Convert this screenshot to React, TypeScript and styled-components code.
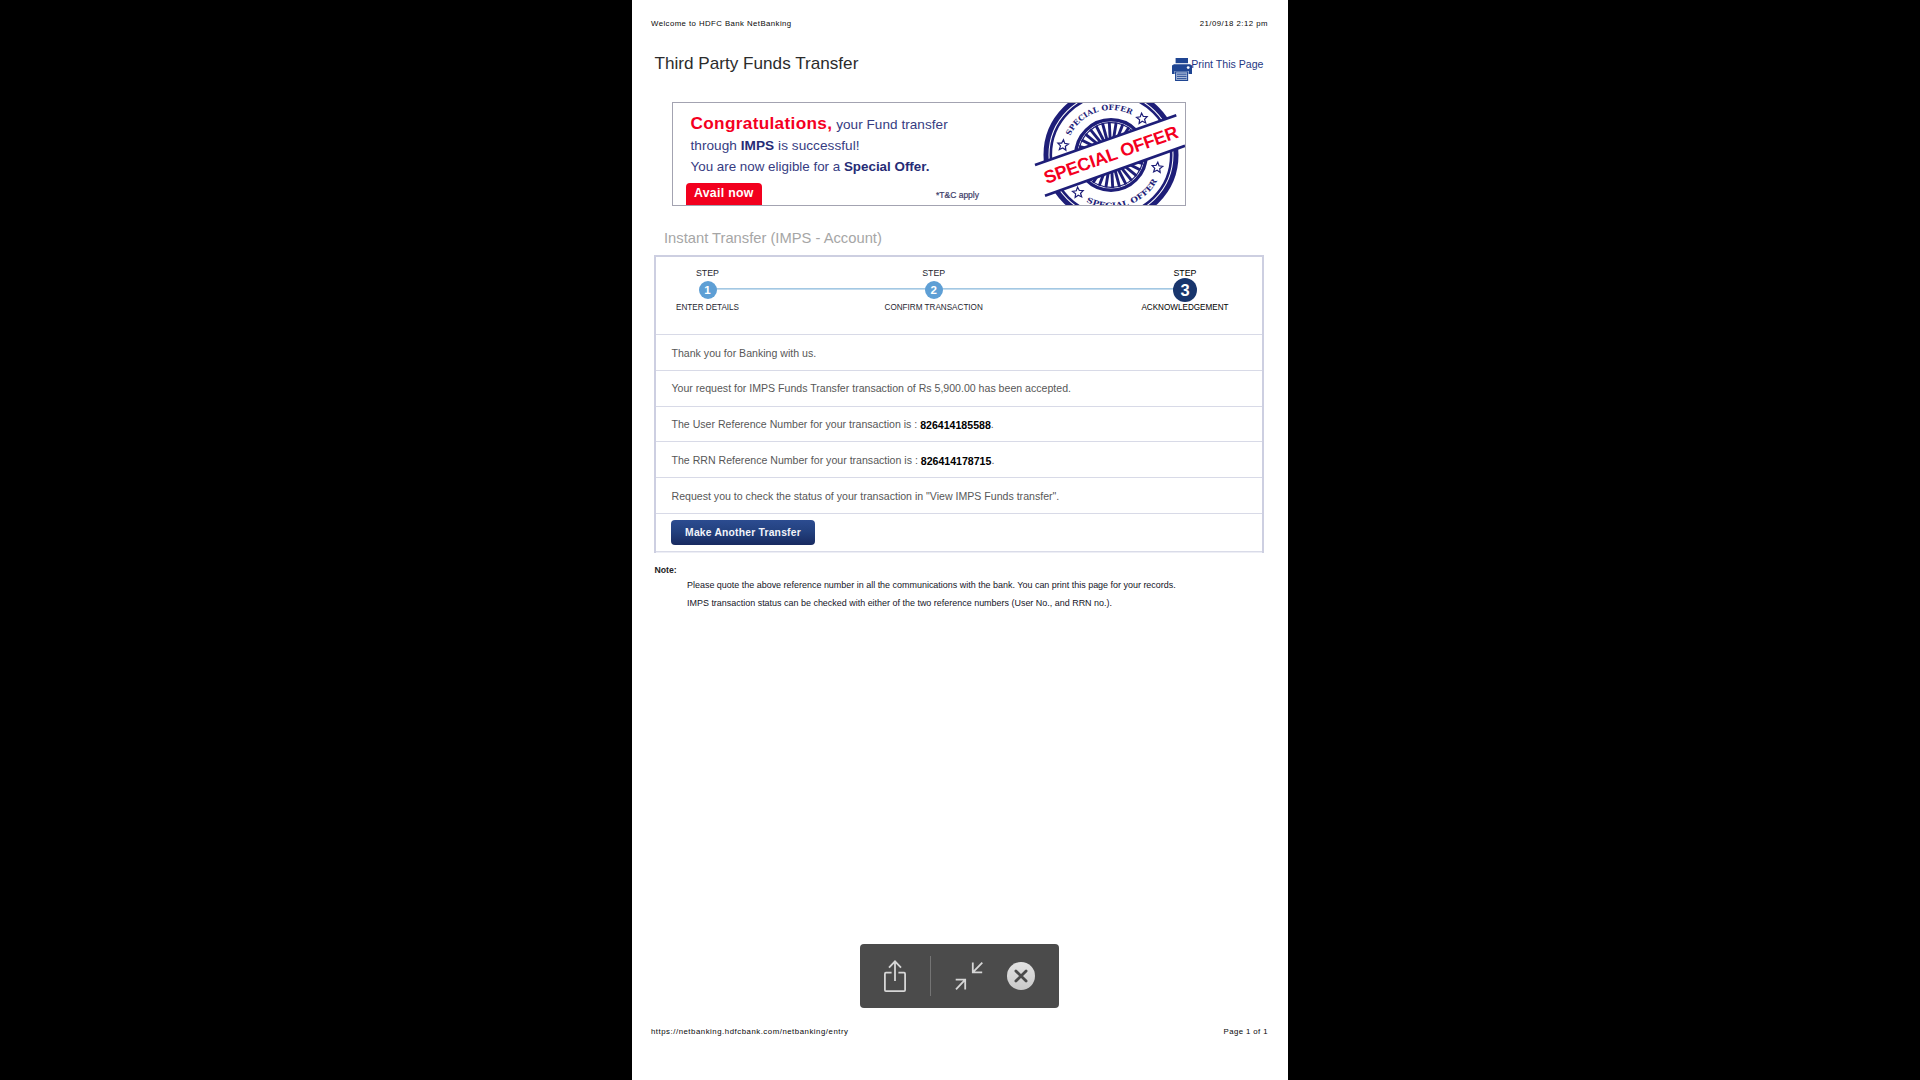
import React from "react";
import styled, { createGlobalStyle } from "styled-components";

const GlobalStyle = createGlobalStyle`
  * { box-sizing: border-box; }
  body {
    margin: 0;
    background: #000;
    overflow: hidden;
    font-family: "Liberation Sans", Arial, Helvetica, sans-serif;
  }
`;

const Viewer = styled.div`
  height: 1080px;
  display: flex;
  justify-content: center;
  background: #000;
`;

const Sheet = styled.main`
  position: relative;
  width: 656px;
  height: 1080px;
  background: #fff;
  display: flex;
  flex-direction: column;
  white-space: nowrap;
`;

const PageMargin = styled.div<{ $footer?: boolean }>`
  display: flex;
  justify-content: space-between;
  padding: 0 20px 0 19px;
  margin-top: ${(p) => (p.$footer ? "auto" : "18px")};
  margin-bottom: ${(p) => (p.$footer ? "42px" : "0")};
  font-size: 7.8px;
  line-height: 12px;
  color: #080808;
`;

const Spaced = styled.span<{ $gap: number }>`
  letter-spacing: ${(p) => p.$gap}px;
`;

const TitleRow = styled.div`
  height: 27px;
  margin-top: 24px;
  padding: 0 24.5px 0 22.5px;
  display: flex;
  justify-content: space-between;
`;

const Title = styled.h1`
  margin: 0;
  font-weight: 400;
  font-size: 17.15px;
  line-height: 18px;
  color: #2b2b2b;
`;

const PrintLink = styled.a`
  display: flex;
  font-size: 10.6px;
  line-height: 20px;
  color: #1f3884;
  svg { margin-top: 4px; margin-right: -0.8px; }
`;

const Banner = styled.section`
  width: 514px;
  height: 104px;
  margin: 21px 0 0 40px;
  border: 1px solid #a3a3b1;
  display: flex;
  justify-content: space-between;
`;

const Offer = styled.div`
  padding-top: 10px;
  width: 330px;
  color: #363c82;
`;

const OfferLine = styled.p<{ $size: number; $gap?: number; $h?: number }>`
  margin: 0 0 0 17.5px;
  font-size: ${(p) => p.$size}px;
  letter-spacing: ${(p) => p.$gap ?? 0}px;
  line-height: 21px;
  height: ${(p) => p.$h ?? 21}px;
  b { color: #262c76; }
`;

const Congrats = styled.strong`
  color: #f4001f;
  font-size: 17.2px;
  letter-spacing: 0.33px;
`;

const OfferBottom = styled.div`
  display: flex;
  justify-content: space-between;
  margin: 6px 24px 0 13px;
`;

const Avail = styled.div`
  width: 76px;
  height: 22px;
  padding-left: 8px;
  border-radius: 4px 4px 0 0;
  background: #f2001e;
  color: #fff;
  font-weight: 700;
  font-size: 12.3px;
  letter-spacing: 0.3px;
  line-height: 20.6px;
`;

const Terms = styled.span`
  font-size: 8.5px;
  line-height: 25px;
  color: #3c3c68;
  -webkit-text-stroke: 0.2px #3c3c68;
`;

const Subtitle = styled.h2`
  margin: 22px 0 0 32px;
  font-size: 14.74px;
  font-weight: 400;
  line-height: 20px;
  color: #a6a6a6;
`;

const Panel = styled.section`
  width: 610px;
  height: 298px;
  margin: 7px 0 0 22px;
  border: 2px solid #cdcfe1;
  border-bottom: 0;
`;

const Steps = styled.div`
  position: relative;
  height: 77px;
  padding-top: 10px;
  display: flex;
  &::before {
    content: "";
    position: absolute;
    left: 52px;
    top: 31px;
    width: 478px;
    height: 2px;
    background: linear-gradient(#a3c8e3 50%, #c4dcee 50%);
  }
`;

const Step = styled.div<{ $width: number; $before: number; $active?: boolean }>`
  position: relative;
  width: ${(p) => p.$width}px;
  margin-left: ${(p) => p.$before}px;
  display: flex;
  flex-direction: column;
  align-items: center;
  color: ${(p) => (p.$active ? "#000" : "#262630")};
`;

const StepWord = styled.span`
  font-size: 8.8px;
  line-height: 12px;
`;

const StepLabel = styled.span`
  font-size: 8.15px;
  line-height: 13px;
`;

const BadgeSlot = styled.div`
  height: 22px;
  display: flex;
  align-items: center;
`;

const Badge = styled.div<{ $active?: boolean }>`
  flex: none;
  width: ${(p) => (p.$active ? 24 : 18)}px;
  height: ${(p) => (p.$active ? 24 : 18)}px;
  border-radius: 50%;
  background: ${(p) => (p.$active ? "#18356c" : "#5e9fd5")};
  color: #fff;
  font-weight: 700;
  font-size: ${(p) => (p.$active ? 16.5 : 11.5)}px;
  line-height: ${(p) => (p.$active ? 24 : 18)}px;
  text-align: center;
`;

const Row = styled.div<{ $h: number; $pad?: number }>`
  height: ${(p) => p.$h}px;
  border-top: 1px solid #d8dae7;
  padding: ${(p) => p.$pad ?? 8}px 0 0 15.5px;
  font-size: 10.59px;
  line-height: 20px;
  color: #575757;
`;

const Ref = styled.b`
  position: relative;
  top: 1px;
  color: #000;
`;

const Button = styled.button`
  display: block;
  width: 144px;
  height: 25px;
  margin-left: -0.5px;
  padding: 0;
  border: 0;
  border-radius: 4px;
  background: linear-gradient(#2c4c90, #23417f 45%, #182a60);
  color: #f2f4fa;
  font: 700 10.3px/25px "Liberation Sans", Arial, sans-serif;
  letter-spacing: 0.22px;
`;

const Closing = styled.div`
  height: 2px;
  background: linear-gradient(#d9dbe8 50%, #edeef5 50%);
`;

const Note = styled.div`
  margin: 11px 0 0 22.5px;
  font-size: 8.7px;
  line-height: 12px;
  color: #222;
`;

const NoteLine = styled.p`
  margin: 0 0 0 32.5px;
  font-size: 8.96px;
  line-height: 18px;
  color: #14141f;
`;

const Toolbar = styled.div`
  position: absolute;
  left: 228px;
  top: 944px;
  width: 199px;
  height: 64px;
  border-radius: 4px;
  background: #4b4b4b;
  svg { display: block; }
`;

const STAMP = "#1e1e78";
const CX = 81;
const CY = 52;

function starPoints(x: number, y: number, tilt: number) {
  return Array.from({ length: 10 }, (_, i) => {
    const r = i % 2 ? 2.6 : 5.6;
    const a = ((i * 36 - 90 + tilt) * Math.PI) / 180;
    return `${x + r * Math.cos(a)},${y + r * Math.sin(a)}`;
  }).join(" ");
}

function polar(r: number, deg: number) {
  const a = (deg * Math.PI) / 180;
  return `${CX + r * Math.cos(a)} ${CY + r * Math.sin(a)}`;
}

const spokes = Array.from({ length: 30 }, (_, i) => i * 12 + 3);

function Stamp() {
  return (
    <svg width="155" height="102" viewBox="0 0 155 102">
      <defs>
        <path id="arcTop" d={`M${polar(45, 205)} A45 45 0 0 1 ${polar(45, 306)}`} />
        <path id="arcBottom" d={`M${polar(53, 118)} A53 53 0 0 0 ${polar(53, 24)}`} />
      </defs>
      <g fill="none" stroke={STAMP}>
        <circle cx={CX} cy={CY} r="65" strokeWidth="5" />
        <circle cx={CX} cy={CY} r="60.2" strokeWidth="2.6" />
        <circle cx={CX} cy={CY} r="35.2" strokeWidth="3.4" />
        <circle cx={CX} cy={CY} r="32.3" strokeWidth="1.2" />
        {spokes.map((a) => (
          <path key={a} d={`M${polar(14, a)} L${polar(33, a)}`} strokeWidth="2.9" />
        ))}
        <circle cx={CX} cy={CY} r="13" strokeWidth="3" />
        <g strokeWidth="1.2">
          <polygon points={starPoints(33, 42.3, 5)} />
          <polygon points={starPoints(112, 15.7, -5)} />
          <polygon points={starPoints(127.3, 64.7, 5)} />
          <polygon points={starPoints(48, 89.7, -5)} />
        </g>
      </g>
      <g fill={STAMP} fontFamily='"DejaVu Serif", serif' fontWeight="700" fontSize="7.4">
        <text>
          <textPath href="#arcTop" textLength="72" lengthAdjust="spacingAndGlyphs">
            SPECIAL OFFER
          </textPath>
        </text>
        <text>
          <textPath href="#arcBottom" textLength="82" lengthAdjust="spacingAndGlyphs">
            SPECIAL OFFER
          </textPath>
        </text>
      </g>
      <path d="M5 62 L146.3 12.3 L155 42.8 L15 92.7 Z" fill="#fff" />
      <path d="M5 62 L146.3 12.3 M15 92.7 L155 42.8" stroke={STAMP} strokeWidth="2.7" />
      <text
        transform="translate(16.5 81) rotate(-19.4)"
        fill="#f4001f"
        fontFamily='"Liberation Sans", Arial, sans-serif'
        fontWeight="700"
        fontSize="18"
        textLength="141"
      >
        SPECIAL OFFER
      </text>
    </svg>
  );
}

function Printer() {
  return (
    <svg width="20" height="23" viewBox="0 0 20 23">
      <rect x="3.6" y="0" width="12.4" height="5.2" fill="#1f4592" />
      <path d="M2 6.3H18L20 7.6V16H0V7.6Z" fill="#1f4592" />
      <rect x="2.6" y="13" width="14" height="10" fill="#fff" />
      <rect x="3.6" y="13.8" width="12" height="8.7" fill="#a9bad8" stroke="#1f4592" strokeWidth="1.1" />
      <path d="M5 16.2H14.5M5 18.4H14.5M5 20.6H14.5" stroke="#1f4592" strokeWidth="0.9" />
      <circle cx="16.2" cy="9.6" r="1.4" fill="#fff" />
    </svg>
  );
}

function ViewerTools() {
  return (
    <Toolbar>
      <svg width="199" height="64" viewBox="0 0 199 64" fill="none">
        <defs>
          <linearGradient id="shine" x1="0" y1="0" x2="0" y2="1">
            <stop offset="0" stopColor="#e2e2e2" />
            <stop offset="1" stopColor="#c9c9c9" />
          </linearGradient>
        </defs>
        <g stroke="#d6d6d6" strokeWidth="1.8">
          <path d="M31.6 28.7H26A1.2 1.2 0 0 0 24.9 29.9V46A1.2 1.2 0 0 0 26 47.2H44A1.2 1.2 0 0 0 45.1 46V29.9A1.2 1.2 0 0 0 44 28.7H38.4" />
          <path d="M35 37V17.5M29 23.7L35 17.3L41 23.7" />
          <path d="M112.8 18.6V28.4H122.2M112.8 28.4L122.3 18.7" />
          <path d="M95.7 35.6H105.2V45.4M105.2 35.6L96 45.3" />
        </g>
        <path d="M70.5 12V52" stroke="#747474" />
        <circle cx="161" cy="32" r="14" fill="url(#shine)" />
        <path d="M155.9 26.9L166.1 37.1M166.1 26.9L155.9 37.1" stroke="#4b4b4b" strokeWidth="2.8" strokeLinecap="round" />
      </svg>
    </Toolbar>
  );
}

export default function App() {
  return (
    <Viewer>
      <GlobalStyle />
      <Sheet>
        <PageMargin>
          <Spaced $gap={0.43}>Welcome to HDFC Bank NetBanking</Spaced>
          <Spaced $gap={0.48}>21/09/18 2:12 pm</Spaced>
        </PageMargin>
        <TitleRow>
          <Title>Third Party Funds Transfer</Title>
          <PrintLink>
            <Printer />
            <span>Print This Page</span>
          </PrintLink>
        </TitleRow>
        <Banner>
          <Offer>
            <OfferLine $size={13.55} $gap={0.05} $h={22}>
              <Congrats>Congratulations,</Congrats> your Fund transfer
            </OfferLine>
            <OfferLine $size={13.6} $gap={0.05}>
              through <b>IMPS</b> is successful!
            </OfferLine>
            <OfferLine $size={13.38}>
              You are now eligible for a <b>Special Offer.</b>
            </OfferLine>
            <OfferBottom>
              <Avail>Avail now</Avail>
              <Terms>*T&amp;C apply</Terms>
            </OfferBottom>
          </Offer>
          <Stamp />
        </Banner>
        <Subtitle>Instant Transfer (IMPS - Account)</Subtitle>
        <Panel>
          <Steps>
            <Step $width={103} $before={0}>
              <StepWord>STEP</StepWord>
              <BadgeSlot><Badge>1</Badge></BadgeSlot>
              <StepLabel>ENTER DETAILS</StepLabel>
            </Step>
            <Step $width={120} $before={114.7}>
              <StepWord>STEP</StepWord>
              <BadgeSlot><Badge>2</Badge></BadgeSlot>
              <StepLabel>CONFIRM TRANSACTION</StepLabel>
            </Step>
            <Step $width={120} $before={131.3} $active>
              <StepWord>STEP</StepWord>
              <BadgeSlot><Badge $active>3</Badge></BadgeSlot>
              <StepLabel>ACKNOWLEDGEMENT</StepLabel>
            </Step>
          </Steps>
          <Row $h={36}>Thank you for Banking with us.</Row>
          <Row $h={36} $pad={7}>
            Your request for IMPS Funds Transfer transaction of Rs 5,900.00 has been accepted.
          </Row>
          <Row $h={35} $pad={7}>
            The User Reference Number for your transaction is : <Ref>826414185588</Ref>.
          </Row>
          <Row $h={36}>
            The RRN Reference Number for your transaction is : <Ref>826414178715</Ref>.
          </Row>
          <Row $h={36}>
            Request you to check the status of your transaction in "View IMPS Funds transfer".
          </Row>
          <Row $h={38} $pad={6}>
            <Button>Make Another Transfer</Button>
          </Row>
          <Closing />
        </Panel>
        <Note>
          <b>Note:</b>
          <NoteLine>
            Please quote the above reference number in all the communications with the bank. You can
            print this page for your records.
          </NoteLine>
          <NoteLine>
            IMPS transaction status can be checked with either of the two reference numbers (User No.,
            and RRN no.).
          </NoteLine>
        </Note>
        <PageMargin $footer>
          <Spaced $gap={0.53}>https://netbanking.hdfcbank.com/netbanking/entry</Spaced>
          <Spaced $gap={0.41}>Page 1 of 1</Spaced>
        </PageMargin>
        <ViewerTools />
      </Sheet>
    </Viewer>
  );
}
